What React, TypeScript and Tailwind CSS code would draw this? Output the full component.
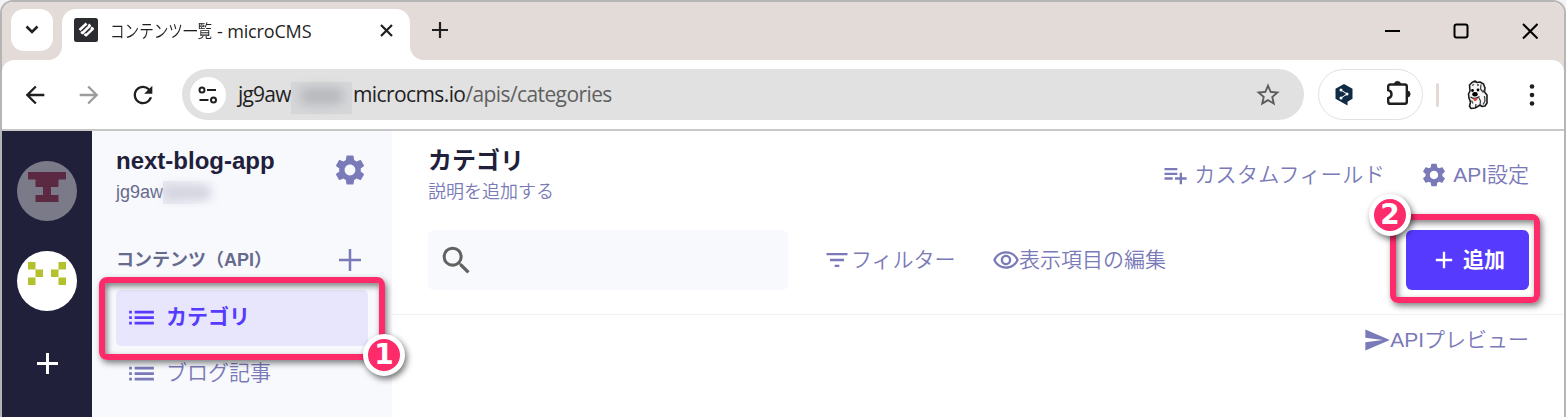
import React from "react";
import {
  MdAdd, MdArrowBack, MdArrowForward, MdFilterList, MdList, MdOutlineRemoveRedEye,
  MdPlaylistAdd, MdRefresh, MdSearch, MdSend, MdSettings, MdStarBorder,
} from "react-icons/md";

const UI = "font-['Open_Sans','Noto_Sans_CJK_JP',sans-serif]";
const APP = "font-['Liberation_Sans','Noto_Sans_CJK_JP',sans-serif]";

function TabStrip() {
  return (
    <div className="flex h-[58px] shrink-0 items-start bg-[#e3dbd7] pt-[7px] pl-[9px]">
      <button className="flex h-[42px] w-[42px] items-center justify-center rounded-[13px] bg-white">
        <svg width="14" height="10" viewBox="0 0 14 10" fill="none" stroke="#1f1f1f" strokeWidth="2.6"><path d="M1.5 1.5 7 7l5.5-5.5" /></svg>
      </button>
      <div className="relative ml-[9px] flex h-[51px] w-[348px] items-start rounded-t-[14px] bg-white pt-[9px] pl-3">
        <svg className="absolute bottom-0 -left-[14px]" width="14" height="14"><path d="M14 0A14 14 0 0 1 0 14H14Z" fill="#fff" /></svg>
        <svg className="absolute -right-[14px] bottom-0" width="14" height="14"><path d="M0 0A14 14 0 0 0 14 14H0Z" fill="#fff" /></svg>
        <svg width="24" height="24" viewBox="0 0 24 24">
          <rect width="24" height="24" rx="2.5" fill="#2b2c30" />
          <g fill="none" stroke="#fff" strokeWidth="2.5" strokeLinejoin="round"><path d="M5.500 12 12.500 5.500" /><path d="M7 14 8.500 15 15.800 7.800 14.500 6.500" /><path d="M10.500 15.800 12 17.300 18.800 10.800 17 9.500" /></g>
        </svg>
        <div className={`ml-3 flex h-6 w-[270px] items-center whitespace-pre pt-[2px] text-[18px] text-[#1f1f1f] ${UI}`}>
          <span className="w-[107px]"><span className="inline-block origin-left scale-x-[0.81] font-[350]">コンテンツ一覧</span></span>
          <span className="tracking-[-0.15px]">- microCMS</span>
        </div>
        <svg className="mt-[6px]" width="13" height="13" viewBox="0 0 13 13" stroke="#1f1f1f" strokeWidth="2.2"><path d="m1 1 11 11M12 1 1 12" /></svg>
      </div>
      <svg className="mt-[13px] ml-[22px]" width="16" height="16" stroke="#1f1f1f" strokeWidth="2.200"><path d="M8 0v16M0 8h16" /></svg>
      <div className="mt-[14px] mr-[26px] ml-auto flex gap-[53px]">
        <svg width="16" height="16" stroke="#000" strokeWidth="2"><path d="M1 8h15" /></svg>
        <svg width="16" height="16" fill="none" stroke="#000" strokeWidth="2"><rect x="1.500" y="1.500" width="13" height="13" rx="2" /></svg>
        <svg width="16" height="16" stroke="#000" strokeWidth="2"><path d="m1 1 14.500 14.500M15.500 1 1 15.500" /></svg>
      </div>
    </div>
  );
}

function Dog() {
  return (
    <svg width="22" height="30" viewBox="0 0 22 30" strokeLinejoin="round">
      <path d="M2.500 5 5 2.500 8 1l2 1.500L13 2l3.500 2L18 8l-.5 4L20 15v8l-2 3-3 .5-2-1.500-1.500 1L8 28l-4 .5L2.500 26 3.500 22 2 18l-.500-4 1.500-3Z" fill="#f6f6f6" stroke="#1c1c1c" strokeWidth="1.600" />
      <path d="M14 4.500 13.500 9l2.500 3 1.500-2M12 18l1.500 3-.5 4M17.500 16l.5 5-2 3.500M4.500 20.500l1.500 3M9 24l-.5 3M5 5.500l2-1M10 5h2" fill="none" stroke="#444" strokeWidth="1.300" />
      <circle cx="5.500" cy="10.500" r="1.400" /><circle cx="11" cy="10" r="1.400" /><ellipse cx="8" cy="14.300" rx="2.700" ry="2.200" />
      <path d="M3.500 17q4.500 3 9-.5" fill="none" stroke="#222" strokeWidth="1.300" />
      <path d="M6 18.500h5l-2 2.500H7Z" fill="#e5483c" />
    </svg>
  );
}

function Toolbar() {
  return (
    <div className="bg-[#e3dbd7]">
      <div className="flex h-[71px] items-start rounded-t-[12px] border-b-2 border-[#c7c7c7] bg-white pt-[9px]">
        <div className="flex h-[51px] w-[180px] items-center pl-[19px] text-[#1f1f1f]">
          <MdArrowBack size={28} />
          <MdArrowForward size={28} className="ml-[26px] text-[#9c9c9c]" />
          <MdRefresh size={28} className="ml-[26px]" />
        </div>
        <div className={`flex h-[51px] w-[1122px] items-center rounded-full bg-[#e1e1e1] pl-2 text-[21px] text-[#1f1f1f] ${UI}`}>
          <div className="flex h-9 w-9 items-center justify-center rounded-full bg-white">
            <svg width="20" height="18" viewBox="0 0 20 18" fill="none" stroke="#1f1f1f" strokeWidth="2"><circle cx="4" cy="4" r="2.500" /><path d="M9 4h9M1.500 14h9" /><circle cx="15.500" cy="14" r="2.500" /></svg>
          </div>
          <span className="ml-3 w-[53px] tracking-[-0.8px]">jg9aw</span>
          <div className="mt-[6px] h-8 w-[61px] bg-[#d6d7d9] px-2 py-[6px]"><div className="h-4 rounded-full bg-[#b4b6bb] blur-[6px]" /></div>
          <span className="ml-[1px] whitespace-nowrap tracking-[-0.6px]">microcms.io<span className="text-[#5f5f5f]">/apis/categories</span></span>
          <MdStarBorder size={28} className="mr-[22px] ml-auto text-[#5c5c5c]" />
        </div>
        <div className="ml-[14px] flex h-[51px] w-[105px] items-center rounded-full border-[1.5px] border-[#e1e1e1] pl-4">
          <svg width="18" height="22" viewBox="0 0 18 22"><path d="M9 0 17.500 4.800v10L12.500 17.800V21.500L9 19.500.5 14.800v-10Z" fill="#0f2b46" /><path d="m6 6 6 4-6 4" fill="none" stroke="#fff" strokeWidth="1" /><g fill="#fff"><circle cx="6" cy="6" r="1.500" /><circle cx="12" cy="10" r="1.500" /><circle cx="6" cy="14" r="1.500" /></g></svg>
          <svg className="mb-1 ml-[33px] shrink-0" width="26" height="26" viewBox="0 0 26 26"><path d="M2.200 6.500q0-2 2-2h14.600q2 0 2 2v15.300q0 2-2 2H4.200q-2 0-2-2v-3.600q3.300-.8 3.300-4t-3.300-4Z" fill="none" stroke="#1f1f1f" strokeWidth="2.400" /><path d="M8.300 4.500a3.200 3.200 0 0 1 6.400 0ZM21 10.800a3.200 3.200 0 0 1 0 6.400Z" fill="#1f1f1f" stroke="#1f1f1f" strokeWidth=".6" /></svg>
        </div>
        <div className="mt-[14px] ml-[13px] h-6 w-[3px] rounded-full bg-[#e3dad6]" />
        <div className="mt-[11px] ml-7 w-6"><Dog /></div>
        <svg className="mt-[14px] ml-[38px]" width="6" height="24" fill="#1f1f1f"><circle cx="3" cy="3.500" r="2.300" /><circle cx="3" cy="12" r="2.300" /><circle cx="3" cy="20.500" r="2.300" /></svg>
      </div>
    </div>
  );
}

function Rail() {
  return (
    <div className="flex w-[90px] shrink-0 flex-col items-center bg-[#21203a] pt-[30px]">
      <svg width="60" height="60"><circle cx="30" cy="30" r="30" fill="#7b7a88" /><path d="M11 11h38v7.500h-7.500V26H34v8h7.500v7h-23v-7H26v-8h-7.500v-7.500H11Z" fill="#5b2941" /></svg>
      <svg className="mt-[30px]" width="60" height="60"><circle cx="30" cy="30" r="30" fill="#fff" /><path d="M11 11h7.500v7.500H11ZM18.500 18.500H26V26h-7.500ZM11 26.500h7.500V34H11ZM41.500 11H49v7.500h-7.500ZM34 18.500h7.500V26H34ZM41.500 26.500H49V34h-7.500Z" fill="#b3c22c" /></svg>
      <svg className="mt-[42px] ml-[1px]" width="22" height="22" stroke="#fff" strokeWidth="3"><path d="M10.500 0v21M0 10.500h21" /></svg>
    </div>
  );
}

function Badge({ n, className }: { n: number; className: string }) {
  return (
    <div className={`absolute flex h-[42px] w-[42px] items-center justify-center rounded-full border-[5px] border-white bg-[#fe2b6b] font-['DejaVu_Sans',sans-serif] text-[28px] leading-none font-bold text-white shadow-[2px_3px_6px_rgba(0,0,0,0.55)] ${className}`}><span className="-mt-px">{n}</span></div>
  );
}

function Sidebar() {
  return (
    <div className="w-[300px] shrink-0 bg-[#f8f9fd] pt-[15px] pl-6">
      <div className="flex h-[97px] w-[252px]">
        <div className="w-[216px]">
          <div className="text-[24px] leading-[30px] font-bold text-[#21203a]">next-blog-app</div>
          <div className="flex h-8 items-center text-[18px] text-[#666a8c]">
            <span className="w-[47px]">jg9aw</span>
            <div className="h-[23px] w-[57px] bg-linear-to-r from-[#e8e9f0] to-[#f8f9fd] py-1"><div className="h-[15px] w-12 rounded-full bg-[#d3d4e0] blur-[5px]" /></div>
          </div>
        </div>
        <MdSettings size={36} className="mt-[6px] shrink-0 text-[#7a7ab8]" />
      </div>
      <div className="flex h-[33px] w-[252px] items-center text-[18px] font-bold text-[#666a8c]">
        <span className="w-[223px] pt-[2px] whitespace-nowrap">コンテンツ（API）</span>
        <svg width="22" height="22" stroke="#7a7ab8" strokeWidth="2.500"><path d="M11 0v22M0 11h22" /></svg>
      </div>
      <div className="relative mt-[14px] flex h-14 w-[252px] items-center rounded-[5px] bg-[#e8e6fd] pl-[9px] text-[21px] font-bold text-[#563bff]">
        <MdList size={33} className="mb-[2px]" /><span className="mb-[2px] ml-[8px]">カテゴリ</span>
        <div className="absolute -top-[13px] -left-[17px] h-[83px] w-[286px] rounded-[8px] border-[6px] border-[#fe2b6b] shadow-[2px_3px_6px_rgba(0,0,0,0.5),inset_2px_3px_6px_rgba(0,0,0,0.5)]" />
        <Badge n={1} className="top-[44px] left-[247px]" />
      </div>
      <div className="flex h-[54px] items-center pl-[9px] text-[21px] font-[350] text-[#7a7ab8]">
        <MdList size={33} /><span className="ml-[8px]">ブログ記事</span>
      </div>
    </div>
  );
}

function Main() {
  return (
    <div className="flex-1 text-[21px] font-[350] text-[#7a7ab8]">
      <div className="flex h-[184px] flex-col border-b border-[#f0f1f6] pl-9">
        <div className="flex h-[99px] justify-between pr-[35px]">
          <div className="pt-[13px]">
            <div className="text-[24px] leading-[34px] font-bold text-[#21203a]">カテゴリ</div>
            <div className="text-[18px] leading-[28px]">説明を追加する</div>
          </div>
          <div className="flex h-[87px] items-center whitespace-nowrap">
            <MdPlaylistAdd size={28} /><span className="ml-[5px] w-[190px] tracking-[0.4px]">カスタムフィールド</span>
            <MdSettings size={28} className="ml-[36px]" /><span className="ml-[5px]">API設定</span>
          </div>
        </div>
        <div className="flex h-[60px] items-center pr-[35px] whitespace-nowrap">
          <div className="flex h-[60px] w-[360px] items-center rounded-[6px] bg-[#f8f9fd] pl-[10px]"><MdSearch size={37} className="text-[#616161]" /></div>
          <MdFilterList size={28} className="ml-[35px]" /><span className="w-[105px]">フィルター</span>
          <MdOutlineRemoveRedEye size={28} className="ml-[36px]" /><span className="-ml-px">表示項目の編集</span>
          <div className="relative ml-auto flex h-[60px] w-[123px] items-center rounded-[6px] bg-[#563bff] pl-[24px] font-bold text-white">
            <MdAdd size={28} /><span className="ml-[5px]">追加</span>
            <div className="absolute -top-[16px] -left-[16px] h-[89px] w-[150px] rounded-[8px] border-[6px] border-[#fe2b6b] shadow-[2px_3px_6px_rgba(0,0,0,0.5),inset_2px_3px_6px_rgba(0,0,0,0.5)]" />
            <Badge n={2} className="-top-[36px] -left-[37px]" />
          </div>
        </div>
      </div>
      <div className="flex h-[50px] items-center justify-end pr-[35px]"><MdSend size={28} /><span className="-ml-px">APIプレビュー</span></div>
    </div>
  );
}

export default function App() {
  return (
    <div className="h-[417px] w-[1566px] overflow-hidden bg-[#f3f3f3]">
      <div className={`flex h-[417px] flex-col overflow-hidden rounded-t-[13px] border-2 border-b-0 border-[#b5b5b5] bg-white ${APP}`}>
        <TabStrip />
        <Toolbar />
        <div className="flex min-h-0 flex-1"><Rail /><Sidebar /><Main /></div>
      </div>
    </div>
  );
}
